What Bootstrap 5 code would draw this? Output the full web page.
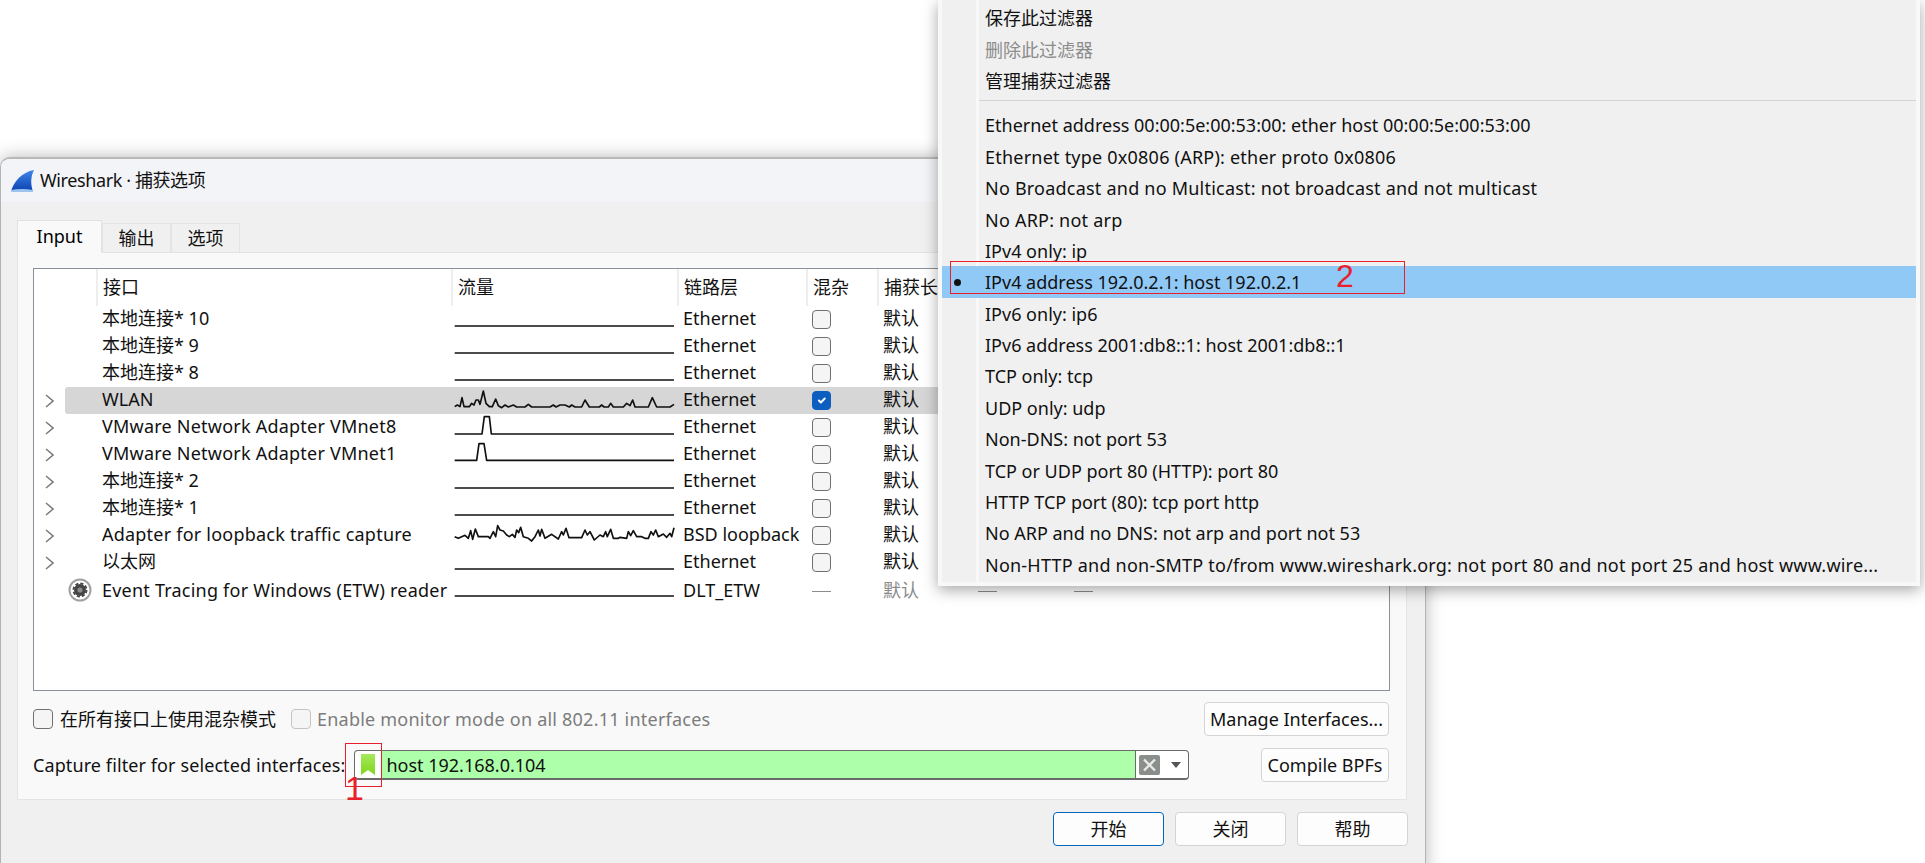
<!DOCTYPE html>
<html lang="zh-CN">

<head>
  <meta charset="UTF-8" />
  <meta name="viewport" content="width=device-width, initial-scale=1" />
  <title>Wireshark · 捕获选项</title>
  <link href="https://cdn.jsdelivr.net/npm/bootstrap@5.3.3/dist/css/bootstrap.min.css" rel="stylesheet" />
  <style>
    html, body { height: 100%; }

    body {
      font-family: "Noto Sans", "Noto Sans CJK SC", sans-serif;
      font-size: 18px;
      color: #111;
      background: #fff;
      overflow: hidden;
    }

    .screen { position: relative; height: 863px; overflow: hidden; padding-top: 157px; }
    .stretch { letter-spacing: .22px; }
    .stretch-sm { letter-spacing: .1px; }

    /* dialog */
    .cap-dialog {
      width: 1426px;
      height: 720px;
      background: #f0f0f0;
      border: 1px solid #b4b4b4;
      border-top: 2px solid #b8b8b8;
      border-radius: 10px;
      box-shadow: 0 0 18px rgba(0, 0, 0, .28);
      overflow: hidden;
    }

    .cap-title { height: 43px; background: #f3f4f7; padding-left: 9px; gap: 6px; letter-spacing: -.4px; }
    .cap-title svg { flex: none; }

    .cap-tabs { margin: 18px 0 0 16px; border: 0; height: 32px; align-items: flex-end; }
    .cap-tabs .nav-link {
      width: 69px;
      height: 30px;
      padding: 0;
      margin: 0;
      line-height: 28px;
      text-align: center;
      color: #111;
      background: #f0f0f0;
      border: 1px solid #e4e4e4;
      border-radius: 0;
    }
    .cap-tabs .nav-link.active {
      width: 85px;
      height: 33px;
      line-height: 30px;
      background: #f9f9f9;
      border-bottom-color: #f9f9f9;
    }

    .cap-pane {
      margin-left: 16px;
      width: 1390px;
      height: 548px;
      background: #f9f9f9;
      border: 1px solid #e4e4e4;
      padding: 15px 16px 0 15px;
    }

    /* interface tree */
    .iface-box { height: 423px; background: #fff; border: 1px solid #8a8f9c; }
    .iface-table { table-layout: fixed; width: 1354px; margin: 0; --bs-table-bg: transparent; color: #111; }
    .iface-table > thead > tr > th {
      height: 37px;
      padding: 1px 0 2px 5px;
      font-weight: 400;
      border: 0;
      border-left: 2px solid #eee;
      vertical-align: middle;
      white-space: nowrap;
      overflow: hidden;
    }
    .iface-table > thead > tr > th.no-rule { border-left: 0; }
    .iface-table > tbody > tr > td {
      height: 27px;
      padding: 0;
      border: 0;
      line-height: 25px;
      white-space: nowrap;
      overflow: hidden;
    }
    .iface-table > tbody > tr > td.txt { padding-left: 5px; padding-bottom: 2px; }
    .iface-table > tbody > tr.etw-row > td.txt { padding-top: 2px; padding-bottom: 0; }
    .iface-table > tbody > tr > td.chk { padding: 4px 0 0 5px; }
    .iface-table > tbody > tr > td.arrow,
    .iface-table > tbody > tr > td.first { vertical-align: middle; }
    .iface-table > tbody > tr.sel-row > td:not(.arrow) { background: #d6d6d6; }
    .iface-table > tbody > tr.sel-row > td.first { border-radius: 3px 0 0 3px; }
    .iface-table > tbody > tr > td.off { color: #8c8c8c; }
    .iface-table svg { display: block; }
    .arrow svg { margin-left: 11px; }
    .tree-dash { display: block; width: 19px; height: 1px; background: #8c8c8c; margin-top: 11px; }

    .cap-check.form-check-input {
      width: 19px;
      height: 19px;
      margin: 0;
      display: block;
      background-color: #f5f5f5;
      border: 1px solid #707070;
      border-radius: 4px;
    }
    .cap-check.form-check-input:checked { background-color: #0c5fbf; border-color: #0c5fbf; background-size: 13px; }
    .cap-check.form-check-input:disabled { opacity: 1; background-color: #f5f5f5; border-color: #c4c4c4; }
    .muted-label { color: #7c7c7c; }

    .cap-row { height: 34px; margin-top: 11px; }
    .cap-row + .cap-row { margin-top: 12px; }
    .cap-row .cap-check.form-check-input { width: 20px; height: 20px; }
    .opt-one { gap: 7px; }
    .opt-two { gap: 6px; margin-left: 15px; }

    .qt-btn {
      height: 34px;
      padding: 0;
      font-size: 18px;
      line-height: 30px;
      color: #111;
      background: #fdfdfd;
      border: 1px solid #d4d4d4;
      border-radius: 4px;
    }
    .qt-btn.manage { width: 185px; margin-right: 1px; }
    .qt-btn.compile { width: 128px; margin-right: 1px; }
    .qt-btn.wide { width: 111px; }
    .qt-btn.go { border-color: #0067c0; }

    /* capture filter */
    .filter-edit {
      width: 835px;
      height: 30px;
      margin-left: 9px;
      background: #fff;
      border: 1px solid #6a6a6a;
      border-bottom-width: 2px;
      border-radius: 4px;
      overflow: hidden;
    }
    .mark-slot { width: 26px; padding-left: 6px; flex: none; }
    .filter-input.form-control {
      width: 755px;
      height: 100%;
      flex: none;
      padding: 0 0 0 5px;
      font-size: 18px;
      color: #111;
      background: #aeffa9;
      border: 0;
      border-right: 1px solid #6a6a6a;
      border-radius: 0;
      box-shadow: none;
    }
    .clear-slot { padding-left: 3px; gap: 11px; }

    .cap-foot { gap: 11px; margin: 12px 17px 0 0; }

    /* popup menu */
    .filter-menu.dropdown-menu {
      position: absolute;
      left: 938px;
      top: 0;
      width: 982px;
      height: 586px;
      padding: 2px 0 0;
      font-size: 18px;
      color: #111;
      background: linear-gradient(to right, #f0f0f0 34px, #f8f8f8 34px, #f8f8f8 37px, #f0f0f0 37px);
      border: 0;
      border-left: 4px solid #f8f8f8;
      border-right: 4px solid #f8f8f8;
      border-bottom: 4px solid #f8f8f8;
      border-radius: 0;
      box-shadow: 0 4px 14px rgba(0, 0, 0, .35);
    }
    .filter-menu .dropdown-item {
      display: flex;
      align-items: center;
      height: 31.4px;
      padding: 2px 0 0 43px;
      color: #111;
      position: relative;
    }
    .filter-menu .dropdown-item.disabled { color: #8c8c8c; }
    .filter-menu .dropdown-item.picked { background: #90c8f6; }
    .filter-menu .dropdown-item.picked::before {
      content: "";
      position: absolute;
      left: 12px;
      top: 13px;
      width: 7px;
      height: 7px;
      border-radius: 50%;
      background: #111;
    }
    .filter-menu .dropdown-divider { margin: 4px 0 8px 37px; height: 1px; border-top: 1px solid #d4d4d4; opacity: 1; }

    /* red marks drawn over the screenshot */
    .red-box { position: absolute; z-index: 1001; border: 1px solid #e8202e; pointer-events: none; }
    .red-num { position: absolute; z-index: 1001; color: #e8202e; font-family: "Liberation Sans", sans-serif; font-size: 32px; line-height: 32px; }
    .red-one { font-size: 34px; }
  </style>
</head>

<body>
  <div class="screen">
    <div class="cap-dialog">
      <div class="cap-title d-flex align-items-center">
        <svg width="24" height="24" viewBox="0 0 24 24">
          <defs>
            <linearGradient id="fin" x1="0" y1="0" x2="0" y2="1">
              <stop offset="0" stop-color="#3f86ea" />
              <stop offset="1" stop-color="#0b3fb0" />
            </linearGradient>
          </defs>
          <path d="M1 23C3 13 12 3 24 1 20 9 21 16 23 23Z" fill="url(#fin)" />
          <path d="M1 21C8 19.5 16 19.5 23 21V23H1Z" fill="#9cc4ee" />
        </svg>
        <span>Wireshark · 捕获选项</span>
      </div>

      <ul class="nav nav-tabs cap-tabs">
        <li class="nav-item"><a class="nav-link active" href="#">Input</a></li>
        <li class="nav-item"><a class="nav-link" href="#">输出</a></li>
        <li class="nav-item"><a class="nav-link" href="#">选项</a></li>
      </ul>

      <div class="cap-pane">
        <div class="iface-box">
          <table class="table iface-table">
            <colgroup>
              <col style="width:31px" /><col style="width:32px" /><col style="width:355px" /><col style="width:226px" />
              <col style="width:129px" /><col style="width:71px" /><col style="width:100px" /><col style="width:96px" /><col />
            </colgroup>
            <thead>
              <tr>
                <th class="no-rule" colspan="2"></th>
                <th>接口</th>
                <th>流量</th>
                <th>链路层</th>
                <th>混杂</th>
                <th>捕获长</th>
                <th></th>
                <th></th>
              </tr>
            </thead>
            <tbody id="ifaceBody"></tbody>
          </table>
        </div>

        <div class="cap-row d-flex align-items-center">
          <label class="opt-one d-flex align-items-center">
            <input class="form-check-input cap-check" type="checkbox" />
            <span>在所有接口上使用混杂模式</span>
          </label>
          <label class="opt-two d-flex align-items-center muted-label">
            <input class="form-check-input cap-check" type="checkbox" disabled />
            <span class="stretch">Enable monitor mode on all 802.11 interfaces</span>
          </label>
          <button class="btn qt-btn manage ms-auto" type="button">Manage Interfaces...</button>
        </div>

        <div class="cap-row d-flex align-items-center">
          <span class="stretch-sm">Capture filter for selected interfaces:</span>
          <div class="filter-edit d-flex align-items-center">
            <span class="mark-slot">
              <svg class="d-block" width="14" height="21" viewBox="0 0 14 21">
                <defs>
                  <linearGradient id="mark" x1="0" y1="0" x2="0" y2="1">
                    <stop offset="0" stop-color="#a6e85a" />
                    <stop offset="1" stop-color="#7dd61f" />
                  </linearGradient>
                </defs>
                <path d="M0 0H14V21L7 16 0 21Z" fill="url(#mark)" />
              </svg>
            </span>
            <input class="form-control filter-input" type="text" value="host 192.168.0.104" />
            <span class="clear-slot d-flex align-items-center">
              <svg width="21" height="20" viewBox="0 0 21 20">
                <rect width="21" height="20" rx="2" fill="#8b8f8b" />
                <path d="M5 4.5 16 15.5M16 4.5 5 15.5" stroke="#e9e9e9" stroke-width="2.4" />
              </svg>
              <svg width="10" height="6" viewBox="0 0 10 6"><path d="M0 0H10L5 6Z" fill="#555" /></svg>
            </span>
          </div>
          <button class="btn qt-btn compile ms-auto" type="button">Compile BPFs</button>
        </div>
      </div>

      <div class="cap-foot d-flex justify-content-end">
        <button class="btn qt-btn wide go" type="button">开始</button>
        <button class="btn qt-btn wide" type="button">关闭</button>
        <button class="btn qt-btn wide" type="button">帮助</button>
      </div>
    </div>

    <ul class="dropdown-menu show filter-menu">
      <li><a class="dropdown-item" href="#">保存此过滤器</a></li>
      <li><a class="dropdown-item disabled" href="#">删除此过滤器</a></li>
      <li><a class="dropdown-item" href="#">管理捕获过滤器</a></li>
      <li><hr class="dropdown-divider" /></li>
      <li><a class="dropdown-item" href="#">Ethernet address 00:00:5e:00:53:00: ether host 00:00:5e:00:53:00</a></li>
      <li><a class="dropdown-item stretch" href="#">Ethernet type 0x0806 (ARP): ether proto 0x0806</a></li>
      <li><a class="dropdown-item stretch" href="#">No Broadcast and no Multicast: not broadcast and not multicast</a></li>
      <li><a class="dropdown-item stretch" href="#">No ARP: not arp</a></li>
      <li><a class="dropdown-item" href="#">IPv4 only: ip</a></li>
      <li><a class="dropdown-item picked" href="#">IPv4 address 192.0.2.1: host 192.0.2.1</a></li>
      <li><a class="dropdown-item" href="#">IPv6 only: ip6</a></li>
      <li><a class="dropdown-item" href="#">IPv6 address 2001:db8::1: host 2001:db8::1</a></li>
      <li><a class="dropdown-item" href="#">TCP only: tcp</a></li>
      <li><a class="dropdown-item" href="#">UDP only: udp</a></li>
      <li><a class="dropdown-item" href="#">Non-DNS: not port 53</a></li>
      <li><a class="dropdown-item" href="#">TCP or UDP port 80 (HTTP): port 80</a></li>
      <li><a class="dropdown-item" href="#">HTTP TCP port (80): tcp port http</a></li>
      <li><a class="dropdown-item" href="#">No ARP and no DNS: not arp and port not 53</a></li>
      <li><a class="dropdown-item stretch" href="#">Non-HTTP and non-SMTP to/from www.wireshark.org: not port 80 and not port 25 and host www.wire...</a></li>
    </ul>

    <!-- annotations -->
    <div class="red-box" style="left:345px;top:743px;width:37px;height:44px"></div>
    <div class="red-num red-one" style="left:345px;top:772px">1</div>
    <div class="red-box" style="left:950px;top:261px;width:455px;height:33px"></div>
    <div class="red-num" style="left:1336px;top:260px">2</div>
  </div>

  <script>
    const flat = "14,60 672,60";
    const wlan = "14,59 22,54 30,59 36,32 42,59 58,59 65,49 72,54 78,39 85,39 90,52 100,12 108,49 118,59 127,59 137,36 145,56 155,62 165,54 175,60 190,54 200,60 225,60 235,52 245,60 300,60 310,54 318,60 330,54 345,54 358,60 365,54 375,60 395,60 405,39 418,60 448,60 455,54 462,60 475,60 482,49 490,60 520,60 530,49 540,56 548,39 555,60 595,60 607,32 620,60 660,60 672,52";
    const loopback = "14,44 25,49 45,40 55,49 62,26 68,52 76,21 85,44 115,44 120,49 130,29 137,44 143,11 150,24 160,27 170,39 178,44 187,37 195,46 200,24 206,32 212,16 220,44 235,49 245,57 255,44 265,24 270,42 275,22 285,49 305,37 325,51 335,29 340,39 348,19 357,47 395,47 405,24 412,39 420,29 433,54 450,39 460,44 467,29 472,44 482,22 490,49 505,49 510,46 530,49 535,29 542,41 550,26 560,44 575,44 585,49 595,49 603,29 610,39 617,24 625,44 640,36 650,46 660,34 665,44 672,17";

    const rows = [
      { name: "本地连接* 10", trend: flat, link: "Ethernet" },
      { name: "本地连接* 9", trend: flat, link: "Ethernet" },
      { name: "本地连接* 8", trend: flat, link: "Ethernet" },
      { name: "WLAN", trend: wlan, link: "Ethernet", arrow: true, selected: true, promisc: true },
      { name: "VMware Network Adapter VMnet8", trend: "14,60 96,60 103,8 118,8 124,60 672,60", link: "Ethernet", arrow: true, wide: true },
      { name: "VMware Network Adapter VMnet1", trend: "14,58 80,58 87,8 102,8 110,58 672,58", link: "Ethernet", arrow: true, wide: true },
      { name: "本地连接* 2", trend: flat, link: "Ethernet", arrow: true },
      { name: "本地连接* 1", trend: flat, link: "Ethernet", arrow: true },
      { name: "Adapter for loopback traffic capture", trend: loopback, link: "BSD loopback", arrow: true, wide: true },
      { name: "以太网", trend: flat, link: "Ethernet", arrow: true },
      { name: "Event Tracing for Windows (ETW) reader", trend: flat, link: "DLT_ETW", etw: true, wide: true }
    ];

    const chevron = '<svg width="9" height="14" viewBox="0 0 9 14"><path d="M1 1 8 7 1 13" fill="none" stroke="#7a7a7a" stroke-width="1.5"/></svg>';
    const gear = '<svg width="24" height="24" viewBox="0 0 24 24" style="margin-left:3px">' +
      '<circle cx="12" cy="12" r="10.5" fill="#fff" stroke="#a0a0a0" stroke-width="2"/>' +
      '<circle cx="12" cy="12" r="6.6" fill="none" stroke="#444" stroke-width="1.8" stroke-dasharray="3.2 2"/>' +
      '<circle cx="12" cy="12" r="6" fill="#444"/><circle cx="12" cy="12" r="2.6" fill="#8a8a8a"/></svg>';

    const body = document.getElementById("ifaceBody");
    rows.forEach(row => {
      const tr = document.createElement("tr");
      if (row.selected) tr.className = "sel-row";
      if (row.etw) tr.className = "etw-row";
      const box = row.etw
        ? '<span class="tree-dash"></span>'
        : '<input class="form-check-input cap-check" type="checkbox"' + (row.promisc ? " checked" : "") + " />";
      tr.innerHTML =
        '<td class="arrow">' + (row.arrow ? chevron : "") + "</td>" +
        '<td class="first">' + (row.etw ? gear : "") + "</td>" +
        '<td class="txt' + (row.wide ? " stretch" : "") + '">' + row.name + "</td>" +
        '<td><svg width="224" height="27" viewBox="6 0 672 81"><polyline points="' + row.trend + '" fill="none" stroke="#111" stroke-width="5" stroke-linejoin="round"/></svg></td>' +
        '<td class="txt">' + row.link + "</td>" +
        '<td class="chk">' + box + "</td>" +
        '<td class="txt' + (row.etw ? " off" : "") + '">默认</td>' +
        "<td>" + (row.etw ? '<span class="tree-dash" style="margin-top:15px"></span>' : "") + "</td>" +
        "<td>" + (row.etw ? '<span class="tree-dash" style="margin-top:15px"></span>' : "") + "</td>";
      body.appendChild(tr);
    });
  </script>

  <script src="https://cdn.jsdelivr.net/npm/bootstrap@5.3.3/dist/js/bootstrap.bundle.min.js"></script>
</body>

</html>
